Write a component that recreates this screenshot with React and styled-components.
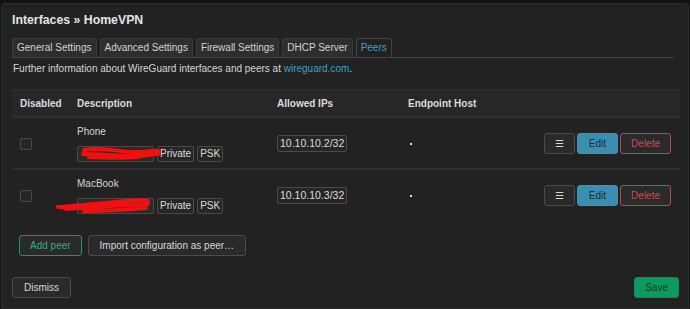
import React from 'react';
import styled, { createGlobalStyle } from 'styled-components';

const GlobalStyle = createGlobalStyle`
  html, body {
    margin: 0;
    padding: 0;
    background: #121212;
    font-family: 'Liberation Sans', Arial, sans-serif;
  }
`;

const Modal = styled.div`
  box-sizing: border-box;
  width: 688px;
  height: 306px;
  margin: 3px 0 0 1px;
  background: #222;
  border: 1px solid #2c2c2c;
  border-radius: 4px 4px 0 0;
  padding: 8px 9px 0 10px;
  color: #ddd;
  font-size: 10px;
  display: flex;
  flex-direction: column;
`;

const Title = styled.h2`
  margin: 0;
  font-size: 12.3px;
  font-weight: bold;
  color: #e4e4e4;
  line-height: 17px;
`;

const Tabs = styled.ul`
  list-style: none;
  margin: 9px 5px 0 0;
  padding: 0;
  display: flex;
  gap: 3px;
  border-bottom: 1px solid #444;
`;

const Tab = styled.li`
  padding: 0 4px;
  height: 18px;
  line-height: 18px;
  font-size: 10px;
  border: 1px solid ${({ active }) => (active ? '#444' : '#3a3a3a')};
  border-bottom: none;
  border-radius: 3px 3px 0 0;
  background: ${({ active }) => (active ? '#222' : '#2e2e2e')};
  color: ${({ active }) => (active ? '#3fa0c6' : '#d2d2d2')};
  margin-bottom: ${({ active }) => (active ? '-1px' : '0')};
  position: relative;
`;

const Info = styled.p`
  margin: 4px 0 0 1px;
  font-size: 10px;
  line-height: 14px;
  color: #d6d6d6;
`;

const Link = styled.a`
  color: #3fa0c6;
  text-decoration: none;
`;

const Table = styled.table`
  margin: 13px 0 0 0;
  width: 668px;
  table-layout: fixed;
  border-collapse: collapse;
  font-size: 10px;
`;

const HeadCell = styled.th`
  text-align: left;
  font-weight: bold;
  color: #dcdcdc;
  background: #272727;
  border-top: 2px solid #2e2e2e;
  border-bottom: 2px solid #2e2e2e;
  height: 25px;
  padding: 0 0 0 8px;
  width: ${({ w }) => (w ? `${w}px` : 'auto')};
`;

const Row = styled.tr`
  border-bottom: ${({ last }) => (last ? 'none' : '2px solid #2e2e2e')};
`;

const Cell = styled.td`
  height: 50px;
  padding: 0 0 0 8px;
  vertical-align: middle;
  color: #d0d0d0;
`;

const Check = styled.span`
  display: inline-block;
  width: 10px;
  height: 10px;
  border: 1px solid #4a4a4a;
  border-radius: 2px;
  background: #262626;
  vertical-align: middle;
  margin-top: 2px;
`;

const PeerName = styled.div`
  font-size: 10px;
  color: #d4d4d4;
  line-height: 14px;
  margin-bottom: 7px;
`;

const KeyLine = styled.div`
  display: flex;
  align-items: center;
  gap: 3px;
`;

const KeyBox = styled.span`
  position: relative;
  display: inline-block;
  box-sizing: border-box;
  width: 77px;
  height: 16px;
  border: 1px solid #4a4a4a;
  border-radius: 2px;
  background: #2a2a2a;
`;

const Scribble = styled.svg`
  position: absolute;
  left: ${({ dx }) => dx}px;
  top: -1px;
  overflow: visible;
`;

const Badge = styled.span`
  display: inline-block;
  height: ${({ big }) => (big ? 15 : 14)}px;
  line-height: ${({ big }) => (big ? 15 : 14)}px;
  padding: 0 2px;
  border: 1px solid #4a4a4a;
  border-radius: 2px;
  background: #262626;
  color: #dcdcdc;
  font-size: ${({ big }) => (big ? 10.5 : 10)}px;
`;

const Dot = styled.span`
  display: inline-block;
  width: 2px;
  height: 2px;
  background: #ddd;
  margin-left: 2px;
  vertical-align: middle;
`;

const Actions = styled.div`
  display: flex;
  justify-content: flex-end;
  gap: 2px;
  padding-right: 9px;
`;

const Button = styled.button`
  font-family: 'Liberation Sans', Arial, sans-serif;
  font-size: 10px;
  height: 21px;
  padding: 0 ${({ px }) => px || 11}px;
  border-radius: 3px;
  cursor: pointer;
  border: 1px solid ${({ variant }) =>
    ({ edit: '#3d93b3', delete: '#b7484c', add: '#17986a', save: '#0d8e57' }[variant] || '#4b4b4b')};
  background: ${({ variant }) =>
    ({ edit: '#3a8fb0', save: '#0c9a5e' }[variant] || '#2a2a2a')};
  color: ${({ variant }) =>
    ({ edit: '#1c2a30', delete: '#d9464c', add: '#2bb27b', save: '#183a28' }[variant] || '#d8d8d8')};
`;

const Footer = styled.div`
  display: flex;
  gap: 6px;
  margin: 15px 0 0 7px;
`;

const Bottom = styled.div`
  display: flex;
  justify-content: space-between;
  margin-top: 21px;
`;

const peers = [
  { name: 'Phone', ip: '10.10.10.2/32', sx: 3 },
  { name: 'MacBook', ip: '10.10.10.3/32', sx: -22 },
];

const paths = {
  phone:
    'M3 4 C18 1 35 5 50 6 C62 7 70 4 78 5 M2 8 C20 8 38 10 55 10 C66 10 72 8 78 8 M8 11 C25 12 42 12 58 11',
  mac:
    'M2 9 C20 8 45 5 70 3 C80 2 88 2 92 3 M10 11 C35 10 60 7 92 6 M28 13 C48 13 68 12 90 10',
};

const Redacted = ({ dx, kind }) => (
  <Scribble dx={dx} width="95" height="16">
    <path
      d={paths[kind]}
      stroke="#f01010"
      strokeWidth="4"
      fill="none"
      strokeLinecap="round"
    />
  </Scribble>
);

export default function App() {
  return (
    <>
      <GlobalStyle />
      <Modal>
        <Title>Interfaces » HomeVPN</Title>
        <Tabs>
          <Tab>General Settings</Tab>
          <Tab>Advanced Settings</Tab>
          <Tab>Firewall Settings</Tab>
          <Tab>DHCP Server</Tab>
          <Tab active>Peers</Tab>
        </Tabs>
        <Info>
          Further information about WireGuard interfaces and peers at <Link href="#">wireguard.com</Link>.
        </Info>
        <Table>
          <thead>
            <tr>
              <HeadCell w={49}>Disabled</HeadCell>
              <HeadCell w={192}>Description</HeadCell>
              <HeadCell w={123}>Allowed IPs</HeadCell>
              <HeadCell w={122}>Endpoint Host</HeadCell>
              <HeadCell />
            </tr>
          </thead>
          <tbody>
            {peers.map((p, i) => (
              <Row key={p.name} last={i === peers.length - 1}>
                <Cell><Check /></Cell>
                <Cell>
                  <PeerName>{p.name}</PeerName>
                  <KeyLine>
                    <KeyBox>
                      <Redacted dx={p.sx} kind={i === 0 ? 'phone' : 'mac'} />
                    </KeyBox>
                    <Badge>Private</Badge>
                    <Badge>PSK</Badge>
                  </KeyLine>
                </Cell>
                <Cell><Badge big>{p.ip}</Badge></Cell>
                <Cell><Dot /></Cell>
                <Cell>
                  <Actions>
                    <Button px={10}>☰</Button>
                    <Button variant="edit" px={11}>Edit</Button>
                    <Button variant="delete" px={10}>Delete</Button>
                  </Actions>
                </Cell>
              </Row>
            ))}
          </tbody>
        </Table>
        <Footer>
          <Button variant="add" px={10}>Add peer</Button>
          <Button px={11}>Import configuration as peer…</Button>
        </Footer>
        <Bottom>
          <Button px={11}>Dismiss</Button>
          <Button variant="save" px={10}>Save</Button>
        </Bottom>
      </Modal>
    </>
  );
}
